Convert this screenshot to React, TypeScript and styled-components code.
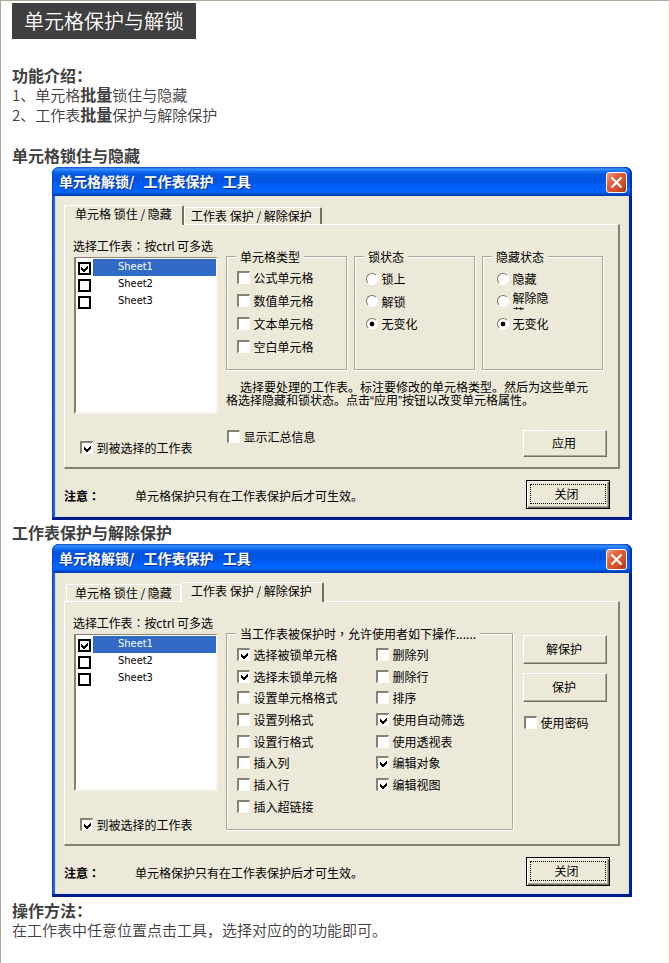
import React from "react";
import styled, { createGlobalStyle, css } from "styled-components";

const FACE = "#ece9d8";
const SHADE = "#aca899";
const DARK = "#716f64";

const GlobalStyle = createGlobalStyle`
  * { box-sizing: border-box; }
  body { margin: 0; background: #fff; }
`;

const Page = styled.main`
  width: 669px;
  height: 963px;
  overflow: hidden;
  padding: 2px 0 0 11px;
  border-left: 1px solid ${SHADE};
  border-top: 1px solid ${SHADE};
  border-right: 1px solid #f1efe2;
  background: #fff;
  color: #404040;
  font-family: "Noto Sans CJK SC", sans-serif;
  font-size: 15px;
  line-height: 20px;
  white-space: nowrap;
`;

const Title = styled.h1`
  width: 184px;
  height: 36px;
  margin: 0 0 26px;
  padding-left: 12px;
  background: #3f3f3f;
  color: #fff;
  font-size: 20px;
  font-weight: 350;
  line-height: 35px;
`;

const Heading = styled.h2<{ $gap?: number; $height?: number }>`
  height: ${(p) => p.$height ?? 20}px;
  margin: ${(p) => p.$gap ?? 0}px 0 0;
  font-size: 16px;
  font-weight: 700;
  line-height: 20px;
`;

const Line = styled.p`
  height: 20px;
  margin: 0;
  font-weight: 350;
`;

const Strong = styled.b`
  font-size: 16px;
  line-height: 18px;
`;

const Window = styled.section`
  display: flex;
  flex-direction: column;
  width: 580px;
  height: 353px;
  margin-left: 40px;
  border-radius: 7px 7px 0 0;
  background: linear-gradient(90deg, #0b3fc0 0, #2a66d8 2px, #0a44d0 50%, #0022a0 99.7%, #001a80 100%);
  padding: 0 3px 3px;
  box-shadow: inset 0 -3px 0 #001c8c;
  color: #000;
  font-size: 12px;
  line-height: 13px;
`;

const TitleBar = styled.header`
  display: flex;
  justify-content: space-between;
  height: 29px;
  margin: 0 -3px;
  padding: 5px 5px 0 7px;
  border-radius: 7px 7px 0 0;
  background: linear-gradient(#0a50c8 0, #3a92fa 2px, #1b74f5 4px, #0458e4 7px, #0053e0 14px, #0060fb 19px, #0066ff 25px, #0048c8 27px, #003aa8 29px);
  box-shadow: inset 1px 0 0 #0a48c8, inset -2px 0 0 #0b2fae;
`;

const Caption = styled.div`
  color: #fff;
  font-size: 14px;
  font-weight: 700;
  line-height: 18px;
  word-spacing: 6px;
  text-shadow: 1px 1px 0 #0c2f86;
`;

const CloseBox = styled.button`
  display: grid;
  place-items: center;
  width: 21px;
  height: 21px;
  padding: 0;
  border: 1px solid #fff;
  border-radius: 3px;
  background: linear-gradient(135deg, #eda18a 0, #e1603a 35%, #d8502a 65%, #a83412 100%);
`;

const Client = styled.div`
  flex: 1;
  padding: 8px 8px 0 8px;
  border: 1px solid #d5e2f2;
  border-top: 0;
  background: ${FACE};
`;

const Tabs = styled.div`
  display: flex;
  align-items: flex-end;
  height: 20px;
`;

const Tab = styled.div<{ $active: boolean; $width: number; $inset?: number; $pad: number; $edge?: boolean }>`
  width: ${(p) => p.$width}px;
  height: ${(p) => (p.$active ? 20 : 17)}px;
  margin-left: ${(p) => p.$inset ?? 0}px;
  padding-left: ${(p) => p.$pad}px;
  border: 1px solid #fff;
  border-width: 1px 0 0 1px;
  border-radius: 2px 2px 0 0;
  border-right: ${(p) => (p.$edge ? `2px solid ${DARK}` : "1px solid #fff")};
  background: ${FACE};
  line-height: ${(p) => (p.$active ? 16 : 15)}px;
  ${(p) =>
    p.$active
      ? css`
          z-index: 1;
          margin-bottom: -1px;
        `
      : css`
          margin-bottom: 0;
        `}
`;

const Panel = styled.div`
  display: flex;
  align-items: flex-start;
  width: 556px;
  height: 245px;
  padding-left: 8px;
  border: 1px solid #fff;
  border-right: 2px solid #858274;
  border-bottom: 2px solid #858274;
`;

const SheetColumn = styled.div`
  width: 153px;
  padding-top: 15px;
`;

const Label = styled.div`
  height: 17px;
  line-height: 12px;
  letter-spacing: -0.1px;
`;

const Punct = styled.span`
  font-family: "Noto Sans CJK TC", sans-serif;
`;

const Quote = styled.span`
  font-family: "Liberation Sans", sans-serif;
`;

const SheetList = styled.div`
  width: 144px;
  height: 157px;
  margin: 0 0 27px 1px;
  padding-top: 1px;
  border: 1px solid;
  border-width: 1px 2px 2px 2px;
  border-color: #858274 #f6f4ea #f6f4ea #858274;
  background: #fff;
`;

const SheetRow = styled.div`
  display: flex;
  align-items: center;
  height: 17px;
  padding-left: 2px;
`;

const SheetCheck = styled.span`
  display: grid;
  place-items: center;
  width: 13px;
  height: 13px;
  margin: 2px 2px 0 0;
  border: 2px solid #000;
`;

const SheetName = styled.span<{ $selected: boolean }>`
  flex: 1;
  height: 17px;
  padding-left: 25px;
  background: ${(p) => (p.$selected ? "#316ac5" : "transparent")};
  color: ${(p) => (p.$selected ? "#fff" : "#000")};
  font-family: "DejaVu Sans Condensed", "Noto Sans", sans-serif;
  font-size: 11px;
  line-height: 16px;
`;

const OptionRow = styled.label`
  display: flex;
  align-items: center;
  gap: 3.5px;
  height: 13px;
`;

const Box = styled.span`
  display: grid;
  place-items: center;
  flex: none;
  width: 13px;
  height: 13px;
  border: 2px solid;
  border-width: 2px 1px 1px 2px;
  border-color: #858274 #fbfaf4 #fbfaf4 #858274;
  background: #fff;
`;

const RadioDot = styled.span<{ $on: boolean }>`
  display: grid;
  place-items: center;
  flex: none;
  width: 12px;
  height: 12px;
  border: 1.5px solid;
  border-color: #7d7a6d #fff #fff #7d7a6d;
  border-radius: 50%;
  background: ${(p) => (p.$on ? "radial-gradient(circle, #000 2px, #fff 2.7px)" : "#fff")};
`;

const Content = styled.div`
  width: 378px;
  padding-top: 31px;
`;

const Groups = styled.div`
  display: flex;
  gap: 7px;
`;

const Group = styled.div<{ $width: number; $height: number }>`
  width: ${(p) => p.$width}px;
  height: ${(p) => p.$height}px;
  padding: 0 0 0 10px;
  border: 1px solid ${SHADE};
  box-shadow: 1px 1px 0 #fff, inset 1px 1px 0 #fff;
`;

const Legend = styled.div`
  width: max-content;
  height: 13px;
  margin: -6px 0 0 -1px;
  padding: 0 4px;
  background: ${FACE};
  line-height: 11px;
`;

const Options = styled.div<{ $pitch: number; $top: number; $inset?: number }>`
  display: grid;
  grid-auto-rows: ${(p) => p.$pitch}px;
  align-items: start;
  margin: ${(p) => p.$top}px 0 0 ${(p) => p.$inset ?? 0}px;
`;

const RadioText = styled.span`
  align-self: flex-start;
  width: 37px;
  height: 20px;
  margin-top: -5px;
  overflow: hidden;
  line-height: 15px;
  white-space: normal;
`;

const Columns = styled.div`
  display: grid;
  grid-template-columns: 139px 139px;
`;

const Message = styled.p`
  margin: 10px 0 0;
  height: 27px;
`;

const Indented = styled.span`
  display: block;
  padding-left: 14px;
`;

const ApplyRow = styled.div`
  display: flex;
  justify-content: space-between;
  padding: 0 0 0 1px;
  margin-top: 23px;
  width: 381px;
`;

const Button = styled.button<{ $height: number }>`
  width: 84px;
  height: ${(p) => p.$height}px;
  padding: 0 2px 3px 0;
  border: 1px solid;
  border-color: #fff ${DARK} ${DARK} #fff;
  background: ${FACE};
  box-shadow: inset -1px -1px 0 ${SHADE};
  color: #000;
  font: inherit;
`;

const FocusButton = styled(Button)`
  padding: 3px 3px 4px;
  border-color: #000;
  box-shadow: inset 1px 1px 0 #fff, inset -1px -1px 0 ${DARK}, inset -2px -2px 0 ${SHADE};
`;

const FocusRing = styled.span`
  display: grid;
  place-items: center;
  height: 100%;
  padding: 0 3px 2px 0;
  border: 1px dotted #000;
`;

const SideColumn = styled.div`
  display: flex;
  flex-direction: column;
  gap: 9px;
  margin-left: 10px;
  padding-top: 33px;
`;

const Footer = styled.footer`
  display: flex;
  align-items: flex-start;
  padding-top: 11px;
`;

const NoteTitle = styled.b`
  width: 71px;
  padding-top: 9px;
`;

const NoteText = styled.span`
  width: 391px;
  padding-top: 9px;
`;

const Tick = () => (
  <svg width="9" height="9" viewBox="0 0 9 9" shapeRendering="crispEdges">
    <path d="M1 3v3l2 2h1l4-4V1L4 5H3z" fill="#000" />
  </svg>
);

function Check({ text, on = false }: { text: string; on?: boolean }) {
  return (
    <OptionRow>
      <Box>{on && <Tick />}</Box>
      <span>{text}</span>
    </OptionRow>
  );
}

function Radio({ text, on = false }: { text: string; on?: boolean }) {
  return (
    <OptionRow>
      <RadioDot $on={on} />
      {text.length > 3 ? <RadioText>{text}</RadioText> : <span>{text}</span>}
    </OptionRow>
  );
}

function Sheets() {
  return (
    <SheetColumn>
      <Label>
        选择工作表<Punct>：</Punct>按ctrl 可多选
      </Label>
      <SheetList>
        {["Sheet1", "Sheet2", "Sheet3"].map((name, i) => (
          <SheetRow key={name}>
            <SheetCheck>{i === 0 && <Tick />}</SheetCheck>
            <SheetName $selected={i === 0}>{name}</SheetName>
          </SheetRow>
        ))}
      </SheetList>
      <Options $pitch={13} $top={0} $inset={7}>
        <Check text="到被选择的工作表" on />
      </Options>
    </SheetColumn>
  );
}

function Dialog({ page, children }: { page: 0 | 1; children: React.ReactNode }) {
  return (
    <Window>
      <TitleBar>
        <Caption>单元格解锁/ 工作表保护 工具</Caption>
        <CloseBox aria-label="关闭">
          <svg width="13" height="13" viewBox="0 0 13 13">
            <path d="M1.5 1.5l10 10M11.5 1.5l-10 10" stroke="#fff" strokeWidth="2.2" />
          </svg>
        </CloseBox>
      </TitleBar>
      <Client>
        <Tabs>
          <Tab $active={page === 0} $width={page === 0 ? 120 : 115} $inset={page === 0 ? 0 : 2} $pad={page === 0 ? 10 : 8} $edge={page === 0}>
            单元格 锁住 / 隐藏
          </Tab>
          <Tab $active={page === 1} $width={page === 1 ? 143 : 138} $pad={page === 1 ? 9 : 6} $edge>
            工作表 保护 / 解除保护
          </Tab>
        </Tabs>
        <Panel>
          <Sheets />
          {children}
        </Panel>
        <Footer>
          <NoteTitle>
            注意<Punct>：</Punct>
          </NoteTitle>
          <NoteText>单元格保护只有在工作表保护后才可生效。</NoteText>
          <FocusButton $height={29}>
            <FocusRing>关闭</FocusRing>
          </FocusButton>
        </Footer>
      </Client>
    </Window>
  );
}

function LockPage() {
  return (
    <Content>
      <Groups>
        <Group $width={121} $height={114}>
          <Legend>单元格类型</Legend>
          <Options $pitch={23} $top={7}>
            {["公式单元格", "数值单元格", "文本单元格", "空白单元格"].map((t) => (
              <Check key={t} text={t} />
            ))}
          </Options>
        </Group>
        <Group $width={121} $height={114}>
          <Legend>锁状态</Legend>
          <Options $pitch={22.5} $top={8} $inset={1}>
            <Radio text="锁上" />
            <Radio text="解锁" />
            <Radio text="无变化" on />
          </Options>
        </Group>
        <Group $width={121} $height={114}>
          <Legend>隐藏状态</Legend>
          <Options $pitch={22.5} $top={8} $inset={4}>
            <Radio text="隐藏" />
            <Radio text="解除隐藏" />
            <Radio text="无变化" on />
          </Options>
        </Group>
      </Groups>
      <Message>
        <Indented>选择要处理的工作表。标注要修改的单元格类型。然后为这些单元</Indented>
        格选择隐藏和锁状态。点击<Quote>“</Quote>应用<Quote>”</Quote>按钮以改变单元格属性。
      </Message>
      <ApplyRow>
        <Check text="显示汇总信息" />
        <Button $height={27}>应用</Button>
      </ApplyRow>
    </Content>
  );
}

const LEFT: [string, boolean][] = [
  ["选择被锁单元格", true],
  ["选择未锁单元格", true],
  ["设置单元格格式", false],
  ["设置列格式", false],
  ["设置行格式", false],
  ["插入列", false],
  ["插入行", false],
  ["插入超链接", false],
];

const RIGHT: [string, boolean][] = [
  ["删除列", false],
  ["删除行", false],
  ["排序", false],
  ["使用自动筛选", true],
  ["使用透视表", false],
  ["编辑对象", true],
  ["编辑视图", true],
];

const ProtectGroup = styled(Group)`
  margin-top: 31px;
`;

function ProtectPage() {
  return (
    <>
      <ProtectGroup $width={287} $height={197}>
        <Legend>
          当工作表被保护时<Punct>，</Punct>允许使用者如下操作......
        </Legend>
        <Columns>
          {[LEFT, RIGHT].map((list, i) => (
            <Options key={i} $pitch={21.7} $top={7}>
              {list.map(([text, on]) => (
                <Check key={text} text={text} on={on} />
              ))}
            </Options>
          ))}
        </Columns>
      </ProtectGroup>
      <SideColumn>
        <Button $height={29}>解保护</Button>
        <Button $height={29}>保护</Button>
        <Options $pitch={13} $top={5} $inset={1}>
          <Check text="使用密码" />
        </Options>
      </SideColumn>
    </>
  );
}

export default function App() {
  return (
    <>
      <GlobalStyle />
      <Page>
        <Title>单元格保护与解锁</Title>
        <Heading>功能介绍：</Heading>
        <Line>
          1、单元格<Strong>批量</Strong>锁住与隐藏
        </Line>
        <Line>
          2、工作表<Strong>批量</Strong>保护与解除保护
        </Line>
        <Heading $gap={20} $height={22}>
          单元格锁住与隐藏
        </Heading>
        <Dialog page={0}>
          <LockPage />
        </Dialog>
        <Heading $gap={2} $height={22}>
          工作表保护与解除保护
        </Heading>
        <Dialog page={1}>
          <ProtectPage />
        </Dialog>
        <Heading $gap={3}>操作方法：</Heading>
        <Line>在工作表中任意位置点击工具，选择对应的的功能即可。</Line>
      </Page>
    </>
  );
}
